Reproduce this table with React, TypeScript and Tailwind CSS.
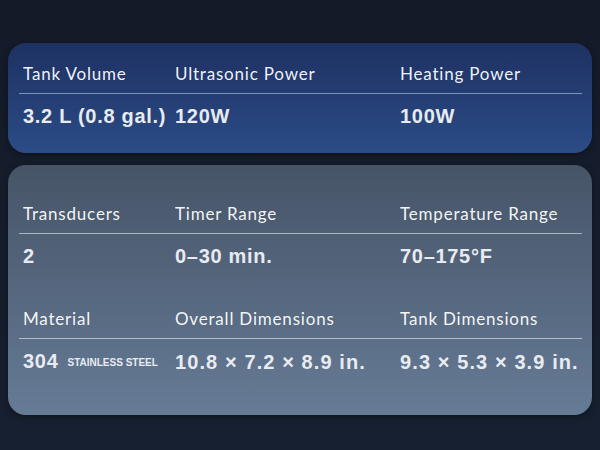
import React from 'react';

type Spec = { label: string; value: React.ReactNode; wide?: boolean };

const labelFont = { fontFamily: 'Lato, "Open Sans", sans-serif' };
const valueFont = { fontFamily: '"Liberation Sans", Arial, sans-serif' };

const SpecRow: React.FC<{ specs: Spec[]; gapTop: string; line: string }> = ({ specs, gapTop, line }) => (
  <div className={gapTop}>
    <div className="grid grid-cols-[152px_225px_1fr] pl-[4px] h-[20px] items-center">
      {specs.map((s) => (
        <span key={s.label} style={labelFont} className="text-[17px] text-white/95 tracking-[0.8px] leading-[20px] whitespace-nowrap">
          {s.label}
        </span>
      ))}
    </div>
    <div className={`mt-[9px] h-px ${line}`} />
    <div className="grid grid-cols-[152px_225px_1fr] pl-[4px] mt-[10px] h-[24px] items-center">
      {specs.map((s) => (
        <span
          key={s.label}
          style={valueFont}
          className={`text-[20px] font-bold text-[#e8ebf0] leading-[24px] whitespace-nowrap ${s.wide ? 'tracking-[1.1px]' : 'tracking-[0.7px]'}`}
        >
          {s.value}
        </span>
      ))}
    </div>
  </div>
);

const App: React.FC = () => {
  return (
    <div className="w-[600px] h-[450px] overflow-hidden bg-gradient-to-b from-[#141a28] to-[#172030] pt-[43px] px-[8px]">
      <div className="rounded-[18px] h-[110px] bg-gradient-to-b from-[#1e3163] to-[#2b4c86] pl-[11px] pr-[10px] shadow-[0_2px_6px_rgba(0,0,0,0.35)]">
        <SpecRow
          gapTop="pt-[21px]"
          line="bg-[#7f92bc]"
          specs={[
            { label: 'Tank Volume', value: '3.2 L (0.8 gal.)' },
            { label: 'Ultrasonic Power', value: '120W' },
            { label: 'Heating Power', value: '100W' },
          ]}
        />
      </div>

      <div className="mt-[12px] rounded-[18px] h-[250px] bg-gradient-to-b from-[#465467] to-[#667b96] pl-[11px] pr-[10px] shadow-[0_2px_6px_rgba(0,0,0,0.35)]">
        <SpecRow
          gapTop="pt-[39px]"
          line="bg-[#a9b5c5]"
          specs={[
            { label: 'Transducers', value: '2' },
            { label: 'Timer Range', value: '0–30 min.' },
            { label: 'Temperature Range', value: '70–175°F' },
          ]}
        />
        <SpecRow
          gapTop="mt-[41px]"
          line="bg-[#b3bfcd]"
          specs={[
            {
              label: 'Material',
              value: (
                <>
                  304
                  <span className="text-[10px] tracking-[0px] align-[2px] ml-[9px]">STAINLESS STEEL</span>
                </>
              ),
            },
            { label: 'Overall Dimensions', value: '10.8 × 7.2 × 8.9 in.', wide: true },
            { label: 'Tank Dimensions', value: '9.3 × 5.3 × 3.9 in.', wide: true },
          ]}
        />
      </div>
    </div>
  );
};

export default App;
